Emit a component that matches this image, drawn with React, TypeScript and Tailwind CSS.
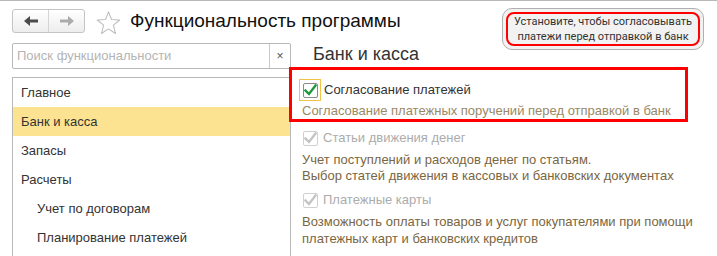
import React from 'react'

const sections = [
  { name: 'Главное', sub: false },
  { name: 'Банк и касса', sub: false, active: true },
  { name: 'Запасы', sub: false },
  { name: 'Расчеты', sub: false },
  { name: 'Учет по договорам', sub: true },
  { name: 'Планирование платежей', sub: true },
]

function Arrow({ dir, color }: { dir: 'left' | 'right'; color: string }) {
  return (
    <svg width="14" height="10" viewBox="0 0 14 10" className={dir === 'right' ? 'rotate-180' : ''}>
      <path d="M0 5 L6 0 L6 3.5 L14 3.5 L14 6.5 L6 6.5 L6 10 Z" fill={color} />
    </svg>
  )
}

function Check({ disabled }: { disabled?: boolean }) {
  return (
    <span
      className={
        'flex h-[15px] w-[15px] items-center justify-center rounded-[2px] border bg-white ' +
        (disabled ? 'border-[#d0d0d0]' : 'border-[#8a8a8a]')
      }
    >
      <svg width="13" height="12" viewBox="0 0 13 12">
        <path
          d="M1.5 6.5 L5 10 L11.5 1.5"
          fill="none"
          stroke={disabled ? '#c4c4c4' : '#1c9a3c'}
          strokeWidth="2.4"
          strokeLinecap="square"
        />
      </svg>
    </span>
  )
}

export default function App() {
  return (
    <div className="relative h-[256px] w-[717px] overflow-hidden border-t border-[#b8b8b8] bg-white font-['Liberation_Sans',Arial,sans-serif] text-[#333]">
      {/* header */}
      <div className="flex h-[24px] items-center pl-3 mt-2">
        <div className="flex h-[24px] w-[73px] rounded-[3px] border border-[#c4c4c4] bg-gradient-to-b from-white to-[#ededed]">
          <div className="flex w-[36px] items-center justify-center border-r border-[#d4d4d4]">
            <Arrow dir="left" color="#4b4b4b" />
          </div>
          <div className="flex flex-1 items-center justify-center">
            <Arrow dir="right" color="#ababab" />
          </div>
        </div>
        <svg width="25" height="24" viewBox="0 0 24 23" className="ml-[11px] mt-[3px]">
          <path
            d="M12 0.8 L14.9 8.1 L22.8 8.6 L16.7 13.6 L18.7 21.6 L12 17.2 L5.3 21.6 L7.3 13.6 L1.2 8.6 L9.1 8.1 Z"
            fill="none"
            stroke="#bdbdbd"
            strokeWidth="1"
            strokeLinejoin="round"
          />
        </svg>
        <h1 className="ml-[9px] text-[19px] leading-[22px] text-[#111]">Функциональность программы</h1>
      </div>

      <div className="mt-[10px] flex">
        {/* left column */}
        <div className="ml-3 w-[279px]">
          <div className="flex h-[26px] rounded-[2px] border border-[#b8b8b8]">
            <div className="flex-1 px-[4px] text-[13px] leading-[24px] text-[#b4b4b4]">Поиск функциональности</div>
            <div className="flex w-[21px] items-center justify-center border-l border-[#c8c8c8] text-[12px] text-[#555]">×</div>
          </div>
          <div className="mt-[8px] h-[200px] border border-[#b8b8b8]">
            {sections.map((s) => (
              <div
                key={s.name}
                className={
                  'h-[29px] text-[13px] leading-[29px] text-[#333] ' +
                  (s.sub ? 'pl-[24px] ' : 'pl-[8px] ') +
                  (s.active ? 'bg-[#fbe391]' : '')
                }
              >
                {s.name}
              </div>
            ))}
          </div>
        </div>

        {/* right column */}
        <div className="flex-1">
          <h2 className="ml-[22px] text-[18px] leading-[22px] text-[#333]">Банк и касса</h2>

          <div className="ml-[8px] mt-[14px] flex h-[22px] items-center">
            <span className="flex h-[22px] w-[22px] items-center justify-center border border-[#f1c447]">
              <Check />
            </span>
            <span className="ml-[3px] text-[13px] text-[#333]">Согласование платежей</span>
          </div>
          <div className="ml-[11px] mt-[2px] text-[13px] leading-[16px] text-[#9a8865]">
            Согласование платежных поручений перед отправкой в банк
          </div>

          <div className="ml-[12px] mt-[9px] flex h-[20px] items-center">
            <Check disabled />
            <span className="ml-[5px] text-[13px] text-[#acacac]">Статьи движения денег</span>
          </div>
          <div className="ml-[11px] mt-[4px] text-[13px] leading-[16px] text-[#7a6642]">
            Учет поступлений и расходов денег по статьям.
            <br />
            Выбор статей движения в кассовых и банковских документах
          </div>

          <div className="ml-[12px] mt-[6px] flex h-[20px] items-center">
            <Check disabled />
            <span className="ml-[5px] text-[13px] text-[#acacac]">Платежные карты</span>
          </div>
          <div className="ml-[11px] mt-[4px] text-[13px] leading-[16.5px] text-[#7a6642]">
            Возможность оплаты товаров и услуг покупателями при помощи
            <br />
            платежных карт и банковских кредитов
          </div>
        </div>
      </div>

      {/* annotation frame */}
      <div className="pointer-events-none absolute left-[289px] top-[66px] h-[55px] w-[399px] border-[3px] border-[#ff0000]" />

      {/* callout */}
      <div className="absolute left-[502px] top-[7px] rounded-[10px] border border-[#b0b0b0] bg-[#f2f2f2] p-[3px]">
        <div className="w-[194px] whitespace-nowrap rounded-[8px] border-2 border-[#ff0000] bg-[#f2f2f2] text-center font-['Roboto',sans-serif] text-[11px] leading-[15px] text-[#333]">
          Установите, чтобы согласовывать
          <br />
          платежи перед отправкой в банк
        </div>
      </div>
    </div>
  )
}
